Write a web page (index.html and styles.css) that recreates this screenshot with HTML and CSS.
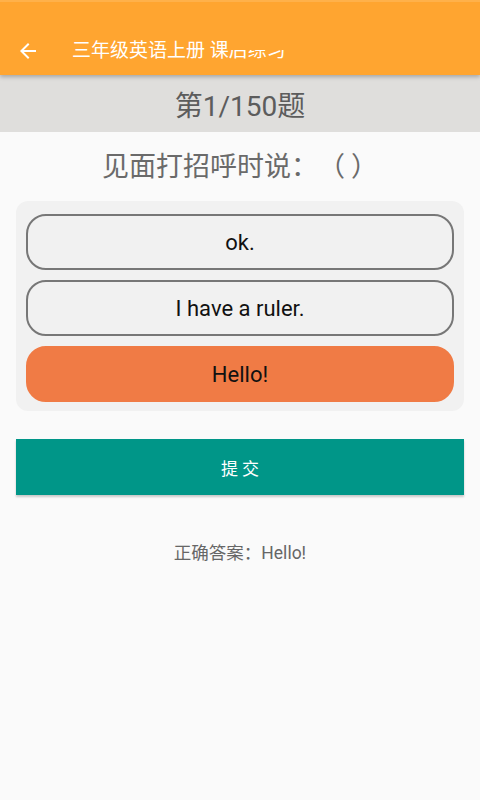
FILE: index.html
```html
<!DOCTYPE html>
<html lang="zh">
<head>
<meta charset="utf-8">
<link rel="stylesheet" href="styles.css">
</head>
<body>
<header class="appbar">
  <svg class="back" viewBox="0 0 24 24" width="24" height="24"><path d="M20 11H7.83l5.59-5.59L12 4l-8 8 8 8 1.41-1.41L7.83 13H20v-2z" fill="#fff"/></svg>
  <div class="title">三年级英语上册 课<span class="clip">后练习</span></div>
</header>
<div class="progress">第1/150题</div>
<main class="content">
  <div class="question">见面打招呼时说：（ ）</div>
  <div class="options">
    <div class="opt">ok.</div>
    <div class="opt">I have a ruler.</div>
    <div class="opt selected">Hello!</div>
  </div>
  <div class="submit">提 交</div>
  <div class="answer">正确答案：Hello!</div>
</main>
</body>
</html>
```
FILE: styles.css
```css
html, body { margin: 0; padding: 0; }
body {
  width: 480px;
  height: 800px;
  background: #fafafa;
  font-family: Roboto, "Noto Sans CJK SC", sans-serif;
  overflow: hidden;
  text-spacing-trim: space-all;
}
.appbar {
  height: 75px;
  background: #ffa530;
  border-top: 2px solid #ffb14a;
  box-sizing: border-box;
  display: flex;
  align-items: center;
  padding-top: 24px;
  box-shadow: 0 2px 4px rgba(0,0,0,0.25);
  position: relative;
  z-index: 2;
}
.back { margin-left: 16px; width: 24px; height: 24px; }
.title {
  margin-left: 32px;
  color: #fff;
  font-size: 19px;
  line-height: 24px;
}
.clip {
  display: inline-block;
  clip-path: inset(48% 0 0 0);
  font-size: 19px;
}
.progress {
  height: 57px;
  background: #dfdedc;
  color: #5c5c5c;
  font-size: 28px;
  display: flex;
  align-items: center;
  justify-content: center;
}
.content {
  padding: 0 16px;
  display: flex;
  flex-direction: column;
}
.question {
  height: 69px;
  display: flex;
  align-items: center;
  justify-content: center;
  color: #6a6a6a;
  font-size: 27px;
  font-family: "Noto Sans CJK SC", sans-serif;
  text-spacing-trim: space-all;
  padding-bottom: 4px;
  box-sizing: border-box;
}
.options {
  background: #f1f1f1;
  border-radius: 12px;
  padding: 13px 10px 9px;
  display: flex;
  flex-direction: column;
  gap: 10px;
}
.opt {
  height: 56px;
  box-sizing: border-box;
  border: 2px solid #777;
  border-radius: 20px;
  background: #f1f1f1;
  color: #111;
  font-size: 22px;
  display: flex;
  align-items: center;
  justify-content: center;
}
.opt.selected {
  background: #f07b45;
  border-color: #f07b45;
}
.submit {
  margin-top: 28px;
  height: 56px;
  background: #009688;
  color: #fff;
  font-size: 17px;
  display: flex;
  align-items: center;
  justify-content: center;
  box-shadow: 0 2px 2px rgba(0,0,0,0.2);
}
.answer {
  margin-top: 44px;
  text-align: center;
  color: #666;
  font-size: 17.5px;
}
```
